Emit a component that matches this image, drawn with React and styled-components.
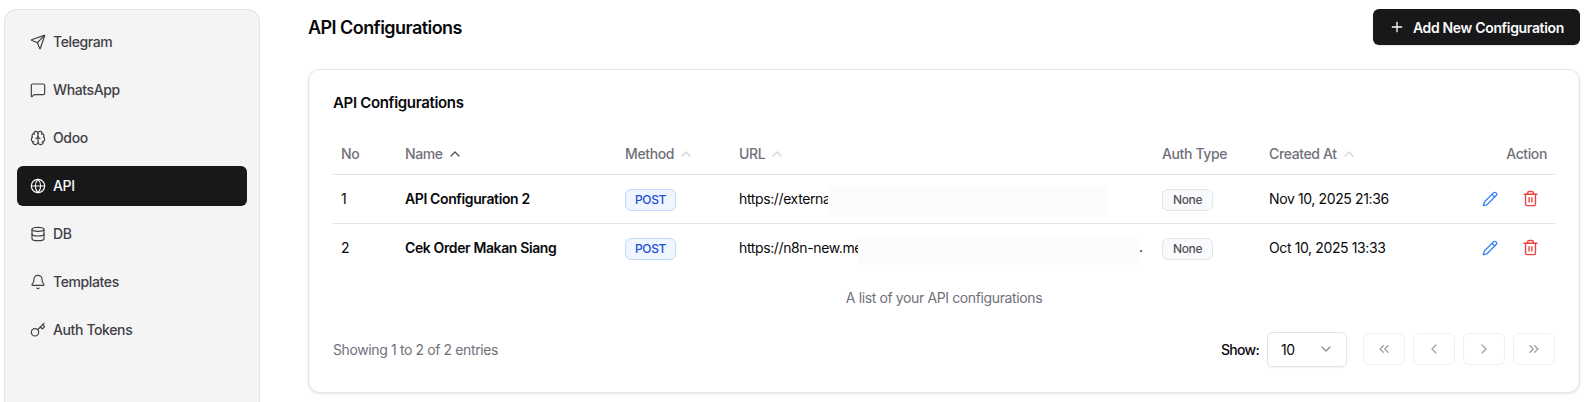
import React from "react";
import styled, { createGlobalStyle } from "styled-components";
import {
  Send,
  MessageSquare,
  Brain,
  Globe,
  Database,
  Bell,
  Key,
  Plus,
  ChevronUp,
  ChevronDown,
  ChevronLeft,
  ChevronRight,
  ChevronsLeft,
  ChevronsRight,
  Pencil,
  Trash2,
} from "lucide-react";

const GlobalStyle = createGlobalStyle`
  html, body {
    margin: 0;
    padding: 0;
    background: #fff;
    height: 402px;
    overflow: hidden;
    font-family: Inter, "Liberation Sans", sans-serif;
    font-size: 14px;
    letter-spacing: -0.38px;
    color: #09090b;
  }
`;

const Layout = styled.div`
  display: flex;
  height: 402px;
  overflow: hidden;
`;

const Sidebar = styled.nav`
  box-sizing: border-box;
  flex: 0 0 256px;
  margin: 9px 0 -20px 4px;
  padding: 12px;
  height: 420px;
  display: flex;
  flex-direction: column;
  gap: 8px;
  background: #f4f4f5;
  border: 1px solid #e4e4e7;
  border-radius: 12px;
`;

const NavItem = styled.a`
  display: flex;
  align-items: center;
  gap: 7px;
  height: 40px;
  padding: 0 12px 0 13px;
  border-radius: 6px;
  font-size: 14px;
  font-weight: 500;
  color: ${(p) => (p.$active ? "#fafafa" : "#3f3f46")};
  background: ${(p) => (p.$active ? "#18181b" : "transparent")};
`;

const NavLabel = styled.span`
  padding-bottom: 2px;
`;

const Main = styled.main`
  flex: 1;
  padding: 9px 8px 0 48px;
  min-width: 0;
`;

const PageHeader = styled.header`
  display: flex;
  justify-content: space-between;
  align-items: center;
  height: 36px;
  margin-bottom: 24px;
`;

const PageTitle = styled.h1`
  margin: 1px 0 0;
  font-size: 18px;
  line-height: 28px;
  font-weight: 600;
  letter-spacing: -0.55px;
`;

const AddButton = styled.button`
  box-sizing: border-box;
  display: flex;
  align-items: center;
  gap: 8px;
  height: 36px;
  padding: 0 16px;
  border: 0;
  border-radius: 6px;
  background: #18181b;
  color: #fafafa;
  font: 600 14px Inter, sans-serif;
  letter-spacing: -0.33px;
  box-shadow: 0 1px 2px rgba(0, 0, 0, 0.1);
`;

const Card = styled.section`
  box-sizing: border-box;
  height: 324px;
  padding: 24px;
  background: #fff;
  border: 1px solid #e4e4e7;
  border-radius: 12px;
  box-shadow: 0 1px 3px rgba(0, 0, 0, 0.1);
`;

const CardTitle = styled.h2`
  margin: 0 0 22px;
  font-size: 15px;
  line-height: 18px;
  font-weight: 600;
  letter-spacing: -0.33px;
`;

const Table = styled.table`
  width: 100%;
  table-layout: fixed;
  border-collapse: collapse;

  tbody tr:last-child {
    border-bottom: 0;
  }
`;

const HeadCell = styled.th`
  box-sizing: border-box;
  height: 40px;
  padding: 0 8px;
  text-align: ${(p) => (p.$right ? "right" : "left")};
  font-size: 14px;
  font-weight: 500;
  color: #71717a;
  width: ${(p) => p.$w || "auto"};
`;

const HeadInner = styled.span`
  display: inline-flex;
  align-items: center;
  gap: 4px;
`;

const Row = styled.tr`
  border-bottom: 1px solid #e4e4e7;
`;

const Cell = styled.td`
  position: relative;
  height: 48px;
  padding: 0 8px;
  font-size: 14px;
  font-weight: ${(p) => (p.$bold ? 600 : 400)};
  white-space: nowrap;
`;

const Badge = styled.span`
  display: inline-block;
  vertical-align: middle;
  box-sizing: border-box;
  height: 22px;
  line-height: 20px;
  margin-top: 2px;
  padding: 0 ${(p) => (p.$tone === "blue" ? 9 : 10)}px;
  border-radius: 6px;
  font-size: 12px;
  font-weight: 500;
  border: 1px solid ${(p) => (p.$tone === "blue" ? "#bfdbfe" : "#e4e4e7")};
  background: ${(p) => (p.$tone === "blue" ? "#eff6ff" : "#f9fafb")};
  color: ${(p) => (p.$tone === "blue" ? "#1d4ed8" : "#52525b")};
`;

const Redaction = styled.span`
  position: absolute;
  top: ${(p) => p.$top}px;
  left: ${(p) => p.$left}px;
  width: 281px;
  height: ${(p) => p.$height}px;
  background: #fcfcfc;
`;

const Tail = styled.span`
  position: absolute;
  left: 408px;
  top: 14px;
`;

const Actions = styled.div`
  display: flex;
  justify-content: flex-end;
  align-items: center;
  gap: 24px;
  padding-right: 8px;
  color: #3b82f6;
`;

const Caption = styled.div`
  margin-top: 16px;
  text-align: center;
  line-height: 20px;
  font-size: 14px;
  color: #71717a;
`;

const Footer = styled.div`
  display: flex;
  justify-content: space-between;
  align-items: center;
  margin-top: 24px;
`;

const Entries = styled.span`
  font-size: 14px;
  color: #71717a;
`;

const Controls = styled.div`
  display: flex;
  align-items: center;
`;

const ShowLabel = styled.span`
  font-size: 14px;
  font-weight: 500;
  letter-spacing: -0.7px;
  margin-right: 8px;
`;

const Select = styled.div`
  box-sizing: border-box;
  display: flex;
  align-items: center;
  justify-content: space-between;
  width: 80px;
  height: 35px;
  padding: 0 12px 0 13px;
  margin-right: 16px;
  border: 1px solid #e4e4e7;
  border-radius: 6px;
  box-shadow: 0 1px 2px rgba(0, 0, 0, 0.05);
  font-size: 14px;
  color: #8f8f96;
`;

const SelectValue = styled.span`
  color: #09090b;
`;

const PageButtons = styled.div`
  display: flex;
  gap: 8px;
`;

const PageButton = styled.button`
  box-sizing: border-box;
  display: flex;
  align-items: center;
  justify-content: center;
  width: 42px;
  height: 32px;
  padding: 0;
  background: #fff;
  border: 1px solid #f0f0f1;
  border-radius: 6px;
  color: #a1a1aa;
`;

const navItems = [
  { label: "Telegram", Icon: Send },
  { label: "WhatsApp", Icon: MessageSquare },
  { label: "Odoo", Icon: Brain },
  { label: "API", Icon: Globe, active: true },
  { label: "DB", Icon: Database },
  { label: "Templates", Icon: Bell },
  { label: "Auth Tokens", Icon: Key },
];

const rows = [
  {
    no: 1,
    name: "API Configuration 2",
    url: "https://external",
    mask: { left: 97, top: 11, height: 30 },
    created: "Nov 10, 2025 21:36",
  },
  {
    no: 2,
    name: "Cek Order Makan Siang",
    url: "https://n8n-new.me",
    tail: ".",
    mask: { left: 127, top: 12, height: 29 },
    created: "Oct 10, 2025 13:33",
  },
];

const SortIcon = ({ dark }) => <ChevronUp size={16} color={dark ? "#52525b" : "#d4d4d8"} />;

export default function App() {
  return (
    <>
      <GlobalStyle />
      <Layout>
        <Sidebar>
          {navItems.map(({ label, Icon, active }) => (
            <NavItem key={label} $active={active}>
              <Icon size={16} strokeWidth={1.75} />
              <NavLabel>{label}</NavLabel>
            </NavItem>
          ))}
        </Sidebar>
        <Main>
          <PageHeader>
            <PageTitle>API Configurations</PageTitle>
            <AddButton>
              <Plus size={16} />
              Add New Configuration
            </AddButton>
          </PageHeader>
          <Card>
            <CardTitle>API Configurations</CardTitle>
            <Table>
              <thead>
                <Row>
                  <HeadCell $w="64px">No</HeadCell>
                  <HeadCell $w="220px">
                    <HeadInner>Name <SortIcon dark /></HeadInner>
                  </HeadCell>
                  <HeadCell $w="114px">
                    <HeadInner>Method <SortIcon /></HeadInner>
                  </HeadCell>
                  <HeadCell $w="423px">
                    <HeadInner>URL <SortIcon /></HeadInner>
                  </HeadCell>
                  <HeadCell $w="107px">Auth Type</HeadCell>
                  <HeadCell $w="180px">
                    <HeadInner>Created At <SortIcon /></HeadInner>
                  </HeadCell>
                  <HeadCell $right>Action</HeadCell>
                </Row>
              </thead>
              <tbody>
                {rows.map((r) => (
                  <Row key={r.no}>
                    <Cell>{r.no}</Cell>
                    <Cell $bold>{r.name}</Cell>
                    <Cell><Badge $tone="blue">POST</Badge></Cell>
                    <Cell>
                      {r.url}
                      <Redaction $top={r.mask.top} $left={r.mask.left} $height={r.mask.height} />
                      {r.tail && <Tail>{r.tail}</Tail>}
                    </Cell>
                    <Cell><Badge>None</Badge></Cell>
                    <Cell>{r.created}</Cell>
                    <Cell>
                      <Actions>
                        <Pencil size={16} />
                        <Trash2 size={17} color="#ef4444" />
                      </Actions>
                    </Cell>
                  </Row>
                ))}
              </tbody>
            </Table>
            <Caption>A list of your API configurations</Caption>
            <Footer>
              <Entries>Showing 1 to 2 of 2 entries</Entries>
              <Controls>
                <ShowLabel>Show:</ShowLabel>
                <Select>
                  <SelectValue>10</SelectValue>
                  <ChevronDown size={16} />
                </Select>
                <PageButtons>
                  <PageButton><ChevronsLeft size={16} /></PageButton>
                  <PageButton><ChevronLeft size={16} /></PageButton>
                  <PageButton><ChevronRight size={16} /></PageButton>
                  <PageButton><ChevronsRight size={16} /></PageButton>
                </PageButtons>
              </Controls>
            </Footer>
          </Card>
        </Main>
      </Layout>
    </>
  );
}
